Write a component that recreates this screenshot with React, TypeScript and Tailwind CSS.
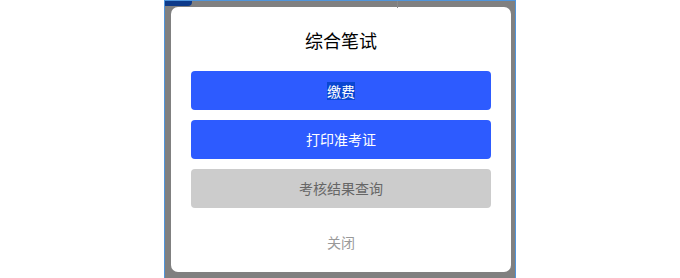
import React from "react";

export default function App() {
  return (
    <div
      className="w-[680px] h-[278px] bg-white flex overflow-hidden"
      style={{ fontFamily: '"Noto Sans CJK SC", "Noto Sans", sans-serif' }}
    >
      <div className="w-[164px] shrink-0" />
      <div className="relative w-[352px] h-[278px] shrink-0 border-l border-r border-t border-[#4f95dc] bg-[#808080]">
        <div className="absolute left-0 top-0 w-[27px] h-[5px] bg-[#0d3a8a] rounded-br-[4px]" />
        <div className="absolute left-[232px] top-0 w-px h-[7px] bg-[#8a8a8a]" />
        <div className="ml-[6px] mt-[6px] w-[340px] h-[265px] bg-white rounded-[7px] px-[20px] pt-[20px] flex flex-col">
          <div className="h-[26px] text-[18px] leading-[26px] text-center text-black font-normal">综合笔试</div>
          <div className="mt-[18px] flex flex-col gap-[10px]">
            <button className="h-[39px] w-full rounded-[4px] bg-[#2d5bff] text-white text-[14px] flex items-center justify-center">
              <span className="bg-[#0a46d1] leading-[18px]">缴费</span>
            </button>
            <button className="h-[39px] w-full rounded-[4px] bg-[#2d5bff] text-white text-[14px] flex items-center justify-center">
              打印准考证
            </button>
            <button className="h-[39px] w-full rounded-[4px] bg-[#cccccc] text-[#666666] text-[14px] flex items-center justify-center">
              考核结果查询
            </button>
          </div>
          <div className="mt-[24px] h-[20px] leading-[20px] text-[14px] text-center text-[#999999]">关闭</div>
        </div>
      </div>
    </div>
  );
}
